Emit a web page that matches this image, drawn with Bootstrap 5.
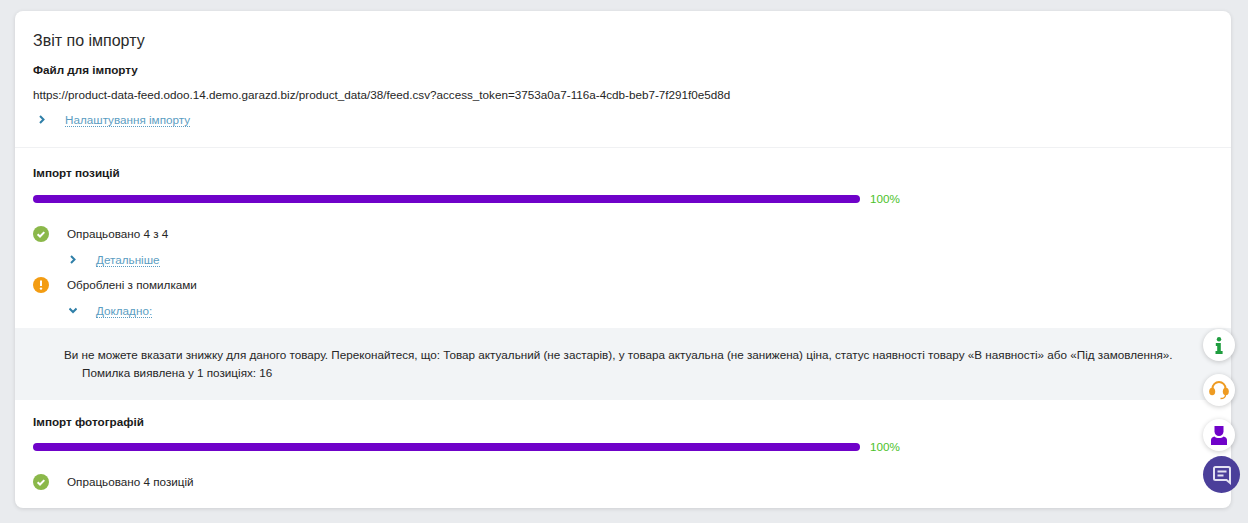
<!doctype html>
<html lang="uk">
  <head>
    <meta charset="UTF-8">
    <meta name="viewport" content="width=device-width, initial-scale=1.0">
    <title>Звіт по імпорту</title>
    <link href="https://cdn.jsdelivr.net/npm/bootstrap@5.3.0/dist/css/bootstrap.min.css" rel="stylesheet">
    <style>
      html, body {
        height: 523px;
        overflow: hidden;
      }
      body {
        background: #e9ebee;
        font-family: "Liberation Sans", Arial, sans-serif;
        font-size: 11.7px;
        color: #262626;
      }
      .report-page {
        padding: 11px 17px 15px 15px;
      }
      .report-card {
        background: #fff;
        border-radius: 8px;
        box-shadow: 0 1px 4px rgba(0,0,0,0.12);
        height: 497px;
      }
      .report-head {
        padding: 20px 18px 0;
        height: 137px;
        border-bottom: 1px solid #f0f1f3;
      }
      .report-title {
        font-size: 16px;
        font-weight: 400;
        line-height: 20px;
        margin: 0 0 10px;
        color: #2a2a2a;
      }
      .report-label {
        font-size: 11.7px;
        font-weight: 700;
        line-height: 18px;
        margin: 0;
        color: #1a1a1a;
      }
      .report-line {
        line-height: 18px;
        height: 28px;
        padding-top: 7px;
      }
      .toggle-row {
        height: 25px;
        line-height: 18px;
      }
      .toggle-link {
        color: #5b9dc2;
        text-decoration: none;
        border-bottom: 1px dotted #5b9dc2;
        line-height: 13px;
      }
      .chev {
        width: 8px;
        height: 9px;
        flex: none;
      }
      .head-toggle .chev { margin: 0 19px 0 5px; }
      .sub-toggle { padding-left: 36px; }
      .sub-toggle .chev { margin-right: 19px; }
      .import-block {
        padding: 16px 18px 5px;
      }
      .photo-block {
        padding-top: 13px;
      }
      .track-row {
        height: 18px;
        margin: 8px 0 13px;
      }
      .photo-block .track-row {
        margin-top: 7px;
      }
      .track {
        width: 827px;
        height: 8px;
        border-radius: 4px;
        background: #6f02c9;
        flex: none;
      }
      .track-pct {
        color: #4cc22a;
        margin-left: 10px;
      }
      .state-row {
        height: 26px;
      }
      .state-ico {
        width: 16px;
        height: 16px;
        margin-right: 18px;
        flex: none;
      }
      .error-box {
        background: #f2f4f6;
        height: 72px;
        padding: 18px 18px 0 49px;
        line-height: 18px;
      }
      .error-count { padding-left: 18px; }
      .side-btn {
        position: absolute;
        left: 1203px;
        width: 32px;
        height: 32px;
        border-radius: 50%;
        background: #fff;
        box-shadow: 0 1px 5px rgba(0,0,0,0.2);
        display: flex;
        align-items: center;
        justify-content: center;
      }
      .side-info { top: 329px; }
      .side-help { top: 374px; }
      .side-user { top: 419px; }
      .chat-btn {
        position: absolute;
        left: 1203px;
        top: 456px;
        width: 37px;
        height: 37px;
        border-radius: 50%;
        background: #4b3f9a;
        display: flex;
        align-items: center;
        justify-content: center;
      }
    </style>
  </head>
  <body>
    <div class="report-page">
      <div class="report-card">

        <!-- Файл -->
        <div class="report-head">
          <h1 class="report-title">Звіт по імпорту</h1>
          <p class="report-label">Файл для імпорту</p>
          <div class="report-line">https://product-data-feed.odoo.14.demo.garazd.biz/product_data/38/feed.csv?access_token=3753a0a7-116a-4cdb-beb7-7f291f0e5d8d</div>
          <div class="toggle-row head-toggle d-flex align-items-center">
            <svg class="chev" viewBox="0 0 8 9"><path d="M2 1l3.500 3.500L2 8" fill="none" stroke="#2f7fa8" stroke-width="2"/></svg>
            <a class="toggle-link" href="#">Налаштування імпорту</a>
          </div>
        </div>

        <!-- Позиції -->
        <div class="import-block">
          <p class="report-label">Імпорт позицій</p>
          <div class="track-row d-flex align-items-center">
            <div class="track"></div>
            <span class="track-pct">100%</span>
          </div>
          <div class="state-row d-flex align-items-center">
            <svg class="state-ico" viewBox="0 0 16 16"><circle cx="8" cy="8" r="8" fill="#8bb84a"/><path d="M4.600 8.200l2.400 2.300 4.300-4.400" fill="none" stroke="#fff" stroke-width="2"/></svg>
            <span>Опрацьовано 4 з 4</span>
          </div>
          <div class="toggle-row sub-toggle d-flex align-items-center">
            <svg class="chev" viewBox="0 0 8 9"><path d="M2 1l3.500 3.500L2 8" fill="none" stroke="#2f7fa8" stroke-width="2"/></svg>
            <a class="toggle-link" href="#">Детальніше</a>
          </div>
          <div class="state-row d-flex align-items-center">
            <svg class="state-ico" viewBox="0 0 16 16"><circle cx="8" cy="8" r="8" fill="#f39c12"/><path d="M8 3.500v5.500" stroke="#fff" stroke-width="2"/><circle cx="8" cy="11.600" r="1.200" fill="#fff"/></svg>
            <span>Оброблені з помилками</span>
          </div>
          <div class="toggle-row sub-toggle d-flex align-items-center">
            <svg class="chev" viewBox="0 0 8 9"><path d="M.5 2.500L4 6l3.500-3.500" fill="none" stroke="#2f7fa8" stroke-width="2"/></svg>
            <a class="toggle-link" href="#">Докладно:</a>
          </div>
        </div>

        <div class="error-box">
          <div>Ви не можете вказати знижку для даного товару. Переконайтеся, що: Товар актуальний (не застарів), у товара актуальна (не занижена) ціна, статус наявності товару «В наявності» або «Під замовлення».</div>
          <div class="error-count">Помилка виявлена у 1 позиціях: 16</div>
        </div>

        <!-- Фото -->
        <div class="import-block photo-block">
          <p class="report-label">Імпорт фотографій</p>
          <div class="track-row d-flex align-items-center">
            <div class="track"></div>
            <span class="track-pct">100%</span>
          </div>
          <div class="state-row d-flex align-items-center">
            <svg class="state-ico" viewBox="0 0 16 16"><circle cx="8" cy="8" r="8" fill="#8bb84a"/><path d="M4.600 8.200l2.400 2.300 4.300-4.400" fill="none" stroke="#fff" stroke-width="2"/></svg>
            <span>Опрацьовано 4 позицій</span>
          </div>
        </div>
      </div>
    </div>

    <!-- Плаваючі кнопки -->
    <a class="side-btn side-info" href="#">
      <svg width="8" height="17" viewBox="0 0 8 17"><circle cx="4" cy="2.200" r="2.200" fill="#1f9d3f"/><path d="M.8 6h5v8h1.800v3H.5v-3h1.700V9H.8z" fill="#1f9d3f"/></svg>
    </a>
    <a class="side-btn side-help" href="#">
      <svg width="20" height="20" viewBox="0 0 20 20"><path d="M3.500 11V8.500a6.500 6.500 0 0 1 13 0V11" fill="none" stroke="#ee9b22" stroke-width="2"/><ellipse cx="3.200" cy="11.500" rx="3" ry="3.800" fill="#ee9b22"/><ellipse cx="16.800" cy="11.500" rx="3" ry="3.800" fill="#ee9b22"/><path d="M16.500 15c0 2.500-2 3.500-5 3.500" fill="none" stroke="#ee9b22" stroke-width="1.300"/></svg>
    </a>
    <a class="side-btn side-user" href="#">
      <svg width="16" height="19" viewBox="0 0 16 19"><path d="M3.500 0h9v5.500c0 2.600-2 4.500-4.500 4.500s-4.500-1.900-4.500-4.500z" fill="#6f02c9"/><path d="M0 19v-5c0-2 1.400-3 3.500-3.500C4.500 11.500 6 12 8 12s3.500-.5 4.500-1.500c2.100.5 3.500 1.500 3.500 3.500v5z" fill="#6f02c9"/></svg>
    </a>
    <a class="chat-btn" href="#">
      <svg width="20" height="20" viewBox="0 0 20 20"><path d="M3.500 2h13A1.500 1.500 0 0 1 18 3.500v14.300L14.500 15h-11A1.500 1.500 0 0 1 2 13.500v-10A1.500 1.500 0 0 1 3.500 2z" fill="none" stroke="#e4e2f2" stroke-width="2"/><path d="M5.500 6.500h9M5.500 10.500h6" stroke="#e4e2f2" stroke-width="2"/></svg>
    </a>

    <script src="https://cdn.jsdelivr.net/npm/bootstrap@5.3.0/dist/js/bootstrap.bundle.min.js"></script>
  </body>
</html>
